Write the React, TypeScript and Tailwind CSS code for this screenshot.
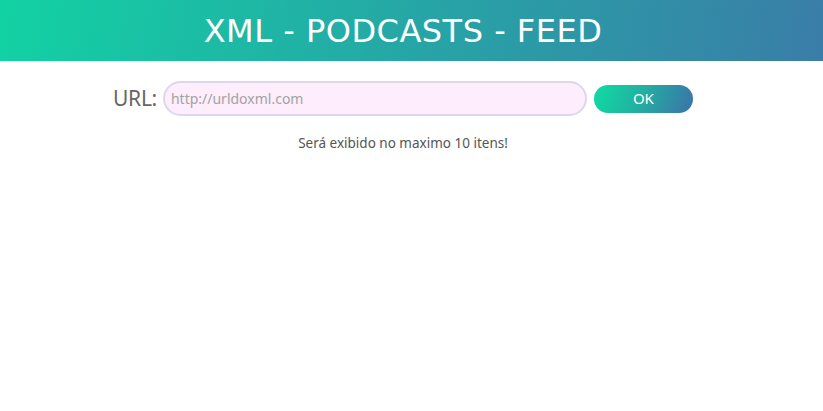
export default function App() {
  return (
    <div className="min-h-screen bg-white font-['Noto_Sans',sans-serif]">
      <header className="h-[61px] flex items-center justify-center pr-[17px] bg-[linear-gradient(100deg,#12d2a3_0%,#26a6a6_50%,#3a7da8_100%)]">
        <h1 className="text-white text-[32px] font-['DejaVu_Sans',sans-serif] tracking-[0.5px] mt-[1px]">
          XML - PODCASTS - FEED
        </h1>
      </header>

      <div className="flex flex-col items-center pr-[17px]">
        <div className="flex items-center mt-[20px]">
          <label className="text-[21px] text-[#666] mr-[6px] leading-none tracking-[-0.3px]">URL:</label>
          <input
            type="text"
            placeholder="http://urldoxml.com"
            className="w-[424px] h-[35px] rounded-full border-2 border-[#dcd7ec] bg-[#fdedfd] px-[6px] text-[14px] text-[#555] placeholder:text-[#a3a3a3] outline-none"
          />
          <button className="ml-[7px] w-[99px] h-[28px] rounded-full bg-[linear-gradient(110deg,#0fdca2_0%,#22b1a2_45%,#3b72a9_100%)] text-white text-[15px]">
            OK
          </button>
        </div>
        <p className="mt-[17px] text-[13.5px] text-[#555]">Será exibido no maximo 10 itens!</p>
      </div>
    </div>
  );
}
